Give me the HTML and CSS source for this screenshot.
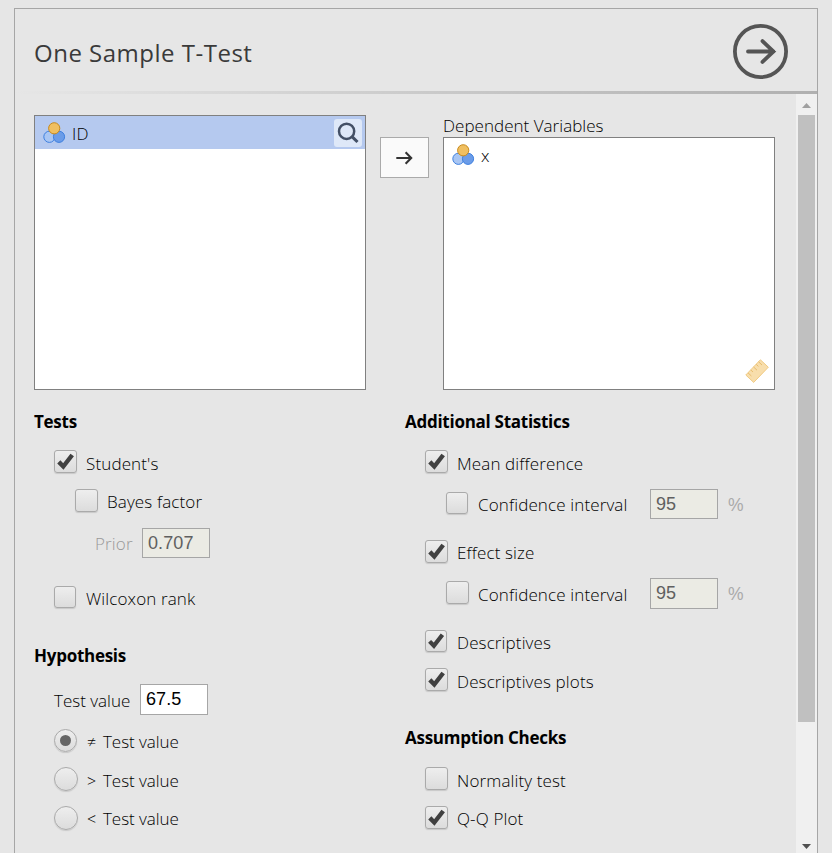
FILE: index.html
```html
<!DOCTYPE html>
<html lang="en">
<head>
<meta charset="utf-8">
<title>One Sample T-Test</title>
<link rel="stylesheet" href="styles.css">
</head>
<body>
<svg class="defs" width="0" height="0">
  <symbol id="nominal" viewBox="0 0 24 24">
    <circle cx="7.4" cy="15.8" r="5.6" fill="#a9c6f3" stroke="#3e80e0"/>
    <circle cx="17" cy="15.8" r="5.6" fill="#6b9ce8" stroke="#3e80e0"/>
    <circle cx="12.2" cy="7.3" r="5.6" fill="#f0bf60" stroke="#c88a1c"/>
  </symbol>
  <symbol id="tick" viewBox="0 0 23 23">
    <path d="M4.8 11.9 L9.3 16.5 L18.2 5" fill="none" stroke="#404040" stroke-width="4.4"/>
  </symbol>
</svg>
<main class="panel">
  <header class="header">
    <h1>One Sample T-Test</h1>
    <svg class="go" width="55" height="55" viewBox="0 0 55 55" fill="none" stroke="#555" stroke-width="3.8">
      <circle cx="27.5" cy="27.5" r="25.6"/>
      <path d="M15 27.5H40.5M29.5 17.1L40.5 27.5L29.5 37.9" stroke-linecap="round"/>
    </svg>
  </header>
  <div class="rule"></div>
  <div class="body">
    <div class="content">
      <section class="variables">
        <div class="list source">
          <div class="item selected">
            <svg width="24" height="24"><use href="#nominal"/></svg>
            <span class="name id">ID</span>
            <span class="search"><svg width="28" height="28" viewBox="0 0 28 28" fill="none" stroke="#435066" stroke-width="2.5"><circle cx="12.6" cy="12.3" r="7.6"/><path d="M18 17.7L23.5 23" stroke-width="3.1"/></svg></span>
          </div>
        </div>
        <button class="move"><svg width="20" height="16" viewBox="0 0 20 16" fill="none" stroke="#333" stroke-width="2.1"><path d="M1.3 8H16M10.6 2.3L16.2 8L10.6 13.7"/></svg></button>
        <div class="target">
          <div class="label"><span class="depvars">Dependent Variables</span></div>
          <div class="list">
            <div class="item">
              <svg width="24" height="24"><use href="#nominal"/></svg>
              <span class="name">x</span>
            </div>
            <svg class="ruler" width="26" height="26" viewBox="0 0 26 26" fill="#f8deac" stroke="#f0ca84" stroke-width="1"><path d="M1.8 17L16.4 1.8L24.3 9.2L9.7 24.4Z"/><path d="M4 14.8L7.4 18M6.8 12L9 14M9.6 9L13 12.2M12.2 6.3L14.4 8.4M14.6 3.8L18 7" fill="none" stroke="#e9bd6d"/></svg>
          </div>
        </div>
      </section>
      <section class="options">
        <div class="column left">
          <h2>Tests</h2>
          <div class="row g10"><span class="check"><svg><use href="#tick"/></svg></span><span class="text">Student's</span></div>
          <div class="row g9 sub"><span class="check"></span><span class="text hi">Bayes factor</span></div>
          <div class="row g12 prior"><span class="text off hi">Prior</span><span class="field off">0.707</span></div>
          <div class="row g24"><span class="check small"></span><span class="text">Wilcoxon rank</span></div>
          <h2 class="g29">Hypothesis</h2>
          <div class="row g13 tall"><span class="text lead">Test value</span><span class="field">67.5</span></div>
          <div class="row g11"><span class="radio on"></span><span class="text choice hi"><i>≠</i>Test value</span></div>
          <div class="row g8"><span class="radio"></span><span class="text choice"><i>&gt;</i>Test value</span></div>
          <div class="row g9"><span class="radio"></span><span class="text choice hi"><i>&lt;</i>Test value</span></div>
        </div>
        <div class="column right">
          <h2>Additional Statistics</h2>
          <div class="row g10"><span class="check"><svg><use href="#tick"/></svg></span><span class="text">Mean difference</span></div>
          <div class="row g12 sub"><span class="check small raised"></span><span class="text ci hi">Confidence interval</span><span class="field off">95</span><span class="percent">%</span></div>
          <div class="row g18"><span class="check"><svg><use href="#tick"/></svg></span><span class="text hi">Effect size</span></div>
          <div class="row g11 sub tall"><span class="check raised"></span><span class="text ci">Confidence interval</span><span class="field off">95</span><span class="percent">%</span></div>
          <div class="row g18"><span class="check small raised"><svg><use href="#tick"/></svg></span><span class="text hi">Descriptives</span></div>
          <div class="row g8"><span class="check"><svg><use href="#tick"/></svg></span><span class="text">Descriptives plots</span></div>
          <h2 class="g28">Assumption Checks</h2>
          <div class="row g11"><span class="check"></span><span class="text">Normality test</span></div>
          <div class="row g9"><span class="check"><svg><use href="#tick"/></svg></span><span class="text hi">Q-Q Plot</span></div>
        </div>
      </section>
    </div>
    <div class="scrollbar">
      <svg width="9" height="5"><path d="M0 5L4.5 0L9 5Z" fill="#a0a0a0"/></svg>
      <div class="thumb"></div>
      <svg class="down" width="9" height="5"><path d="M0 0L4.5 5L9 0Z" fill="#505050"/></svg>
    </div>
  </div>
</main>
</body>
</html>
```
FILE: styles.css
```css
* { box-sizing: border-box; }
html, body { height: 100%; overflow: hidden; }
body {
  margin: 0;
  padding: 8px 14px 0;
  background: #e6e6e6;
  color: #000;
  font: 300 17px/24px "Open Sans", "Noto Sans", sans-serif;
  letter-spacing: 0.13px;
}
svg { display: block; flex: none; }
.defs { position: absolute; }
.panel {
  height: 845px;
  display: flex;
  flex-direction: column;
  border: 1px solid #a6a6a6;
  border-bottom: 0;
}
.header {
  height: 82px;
  flex: none;
  display: flex;
  align-items: center;
  justify-content: space-between;
  padding: 3px 29px 0 19px;
}
h1 { margin: 0; padding-top: 2px; font-size: 24px; font-weight: 400; line-height: 34px; letter-spacing: 0.5px; color: #3a3a3a; }
.rule {
  height: 3px;
  flex: none;
  background: linear-gradient(to right, #e6e6e6 0, #b0b0b0 100%);
}
.body { flex: 1; display: flex; min-height: 0; }
.content { flex: 1; padding: 21px 21px 0 19px; overflow: hidden; }

.variables { display: flex; height: 275px; }
.list { position: relative; background: #fff; border: 1px solid #808080; }
.source { width: 332px; }
.item { display: flex; align-items: center; height: 33px; padding: 0 3px 0 7px; }
.selected { background: #b5c9ef; }
.name { margin-left: 6px; padding-top: 2px; color: #000; }
.search { margin-left: auto; width: 28px; height: 28px; border-radius: 3px; background: #dee8f8; }
.move {
  width: 49px;
  height: 41px;
  margin: 22px 14px 0;
  padding: 0;
  display: flex;
  align-items: center;
  justify-content: center;
  background: #fafafa;
  border: 1px solid #aaa;
}
.target { width: 332px; display: flex; flex-direction: column; }
.target .label { height: 22px; line-height: 22px; letter-spacing: 0.03px; white-space: nowrap; }
.target .list { flex: 1; }
.ruler { position: absolute; right: 4px; bottom: 5px; }

.options { display: flex; padding-top: 17px; }
.column.left { width: 371px; }
.column.right { width: 370px; }
h2 { margin: 0; height: 30px; line-height: 30px; font-size: 17px; font-weight: 700; letter-spacing: -0.27px; color: #000; white-space: nowrap; }
.row { display: flex; align-items: center; height: 30px; padding-left: 20px; white-space: nowrap; }
.tall { height: 31px; }
.sub { padding-left: 41px; }
.prior { padding-left: 61px; }
.g8 { margin-top: 8px; }
.g9 { margin-top: 9px; }
.g10 { margin-top: 10px; }
.g11 { margin-top: 11px; }
.g12 { margin-top: 12px; }
.g13 { margin-top: 13px; }
.g18 { margin-top: 18px; }
.g24 { margin-top: 24px; }
.g28 { margin-top: 28px; }
.g29 { margin-top: 29px; }

.check, .radio {
  width: 23px;
  height: 23px;
  flex: none;
  margin-right: 9px;
  margin-bottom: 1px;
  border: 1px solid #aaa;
  border-radius: 3px;
  background: linear-gradient(#eee, #dcdcdc);
  box-shadow: 0 1px 1px #c8c8c8;
}
.check svg { width: 23px; height: 23px; margin: -1px; }
.check.small { width: 22px; height: 22px; margin-right: 10px; margin-bottom: 0; }
.check.small svg { width: 22px; height: 22px; }
.check.raised { margin-bottom: 2px; }
.radio { width: 24px; height: 24px; margin-bottom: 0; border-radius: 50%; display: flex; align-items: center; justify-content: center; }
.radio.on { width: 23px; height: 23px; margin-right: 10px; margin-bottom: 1px; }
.radio.on::after { content: ""; width: 11px; height: 11px; border-radius: 50%; background: #666; }
.text { padding-top: 3px; }
.text.hi { padding-top: 1px; }
.text.off { width: 47px; color: #999; }
.text.lead { width: 86px; letter-spacing: 0; }
.text.choice { letter-spacing: -0.05px; }
.text.ci { width: 172px; }
.text i { display: inline-block; width: 16px; font-style: normal; font-size: 16px; }
.field {
  width: 68px;
  height: 100%;
  padding: 0 5px;
  border: 1px solid #a6a6a6;
  background: #fff;
  font: 400 18px/28px "Liberation Sans", Arial, sans-serif;
  letter-spacing: 0.1px;
}
.field.off { background: #ebebe4; color: #606060; }
.percent { margin-left: 10px; padding-top: 2px; font: 300 17.5px "Liberation Sans", Arial, sans-serif; color: #aaa; }

.scrollbar {
  width: 21px;
  flex: none;
  display: flex;
  flex-direction: column;
  align-items: center;
  padding: 9px 0 4px;
  background: #f0f0f0;
}
.thumb { width: 17px; height: 607px; margin-top: 7px; background: #c0c0c0; }
.down { margin-top: auto; }
```
